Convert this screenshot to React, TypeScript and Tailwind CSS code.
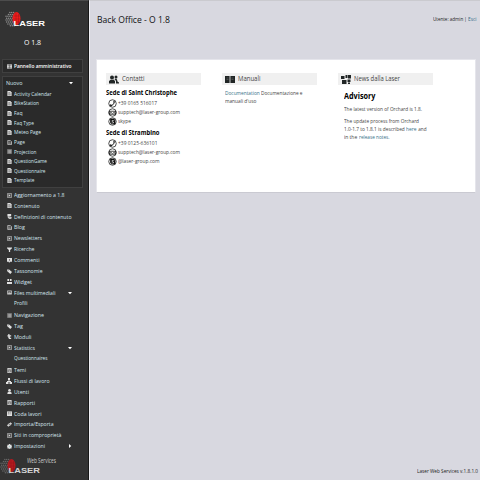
import { useLayoutEffect, useRef } from 'react';

/* Text that is condensed or widened so that it fills a given width. */
function Fit({ w, children, className = '' }: { w: number; children: string; className?: string }) {
  const ref = useRef<HTMLSpanElement>(null);
  useLayoutEffect(() => {
    const el = ref.current;
    if (!el) return;
    el.style.transform = 'none';
    const natural = el.getBoundingClientRect().width;
    el.style.transform = `scaleX(${w / natural})`;
    el.style.marginRight = `${w - natural}px`;
  }, [w, children]);
  return <span ref={ref} className={`inline-block origin-left whitespace-pre ${className}`}>{children}</span>;
}

type Kind = 'doc' | 'page' | 'box' | 'list' | 'filter' | 'comment' | 'tag' | 'widget' | 'image' | 'module' | 'flow' | 'user' | 'queue' | 'swap' | 'gear' | 'defs' | 'grid' | 'report';

function Icon({ k }: { k: Kind }) {
  return (
    <svg viewBox="0 0 12 12" className={k === 'flow' ? '-ml-px block h-[6px] w-[6px] shrink-0' : 'block h-[5px] w-[5px] shrink-0'} fill="#e0e0e0" stroke="none">
      {k === 'doc' && <><path d="M1 0h7l3 3v9H1z" /><path d="M3 4h5M3 7h6M3 9.5h6" stroke="#444" strokeWidth="1.2" /></>}
      {k === 'report' && <><path d="M1 0h10v12H1z" /><path d="M3 3h6M3 5.5h6v4H3z" fill="none" stroke="#333" strokeWidth="1.3" /></>}
      {k === 'page' && <><path d="M1.8 1h6l3 3v7h-9z" fill="none" stroke="#ddd" strokeWidth="1.7" /><path d="M3 5h6M3 8h6" stroke="#ddd" strokeWidth="1.3" /></>}
      {k === 'box' && <><path d="M1 1h10v10H1z" fill="#555" stroke="#bbb" strokeWidth="1.6" /><path d="M4 3l4 3-4 3z" /></>}
      {k === 'list' && <><path d="M1 1h10v10H1z" fill="#777" stroke="#999" /><path d="M3 4h7M3 6.5h7M3 9h7" stroke="#ddd" /></>}
      {k === 'filter' && <path d="M0 1h12v2L7.5 7v5h-3V7L0 3z" />}
      {k === 'comment' && <><path d="M0 0h12v9H7l-2 3-1-3H0z" /><circle cx="6" cy="4.5" r="1.5" fill="#444" /></>}
      {k === 'tag' && <><path d="M0 1h5l7 6-4 5-8-7z" /><circle cx="2.5" cy="3" r="1" fill="#333" /></>}
      {k === 'widget' && <path d="M1 0h4v5H1zM7 0h4v5H7zM0 7h12v5H0z" />}
      {k === 'image' && <><path d="M1 2h10v8H1z" fill="#555" stroke="#ddd" strokeWidth="1.6" /><path d="M2 9l3-4 2 2 1-1 3 3z" /></>}
      {k === 'module' && <path d="M3 0h3v3h4v3H7v3h3v3H5l-2-3V6H1V3h2z" />}
      {k === 'flow' && <path d="M4 0h4v4H7v2h3v2h2v4H7V8H5v4H0V8h2V6h3V4H4z" />}
      {k === 'user' && <><circle cx="6" cy="3" r="3" /><path d="M1 12V9l3-3h4l3 3v3z" /></>}
      {k === 'queue' && <><path d="M0 1h12v11H0z" /><path d="M2 4h4M8 4h2M2 7h4M8 7h2" stroke="#444" strokeWidth="1.3" /></>}
      {k === 'swap' && <path d="M4 3h4V0l4 4-4 4V5H4zM0 8l4-4v2h4v3H4v3z" />}
      {k === 'gear' && <><path d="M5 0h2l1 2 3 0v3l1 1-1 2v3H8l-2 1-2-1H1V8L0 6l1-2V2h3z" /><circle cx="6" cy="6" r="1.5" fill="#9cc" /></>}
      {k === 'defs' && <><path d="M1 0h9v5H1z" /><path d="M1 6l4-1 6 2v4l-4 1-4-2z" /><path d="M4 7h5" stroke="#333" strokeWidth="1.2" /></>}
      {k === 'grid' && <><path d="M0 1h12v10H0z" /><path d="M1 4h10M1 8h10M6 1v10" stroke="#444" strokeWidth="1.2" /></>}
    </svg>
  );
}

const created: [Kind, string, number][] = [
  ['doc', 'Activity Calendar', 37.5], ['doc', 'BikeStation', 25], ['doc', 'Faq', 8.5], ['doc', 'Faq Type', 20],
  ['doc', 'Meteo Page', 27], ['page', 'Page', 11], ['list', 'Projection', 22.5], ['doc', 'QuestionGame', 33],
  ['doc', 'Questionnaire', 31.5], ['doc', 'Template', 20.5],
];

type Item = { k?: Kind; t: string; w: number; caret?: 'down' | 'right' };
const menu: Item[] = [
  { k: 'box', t: 'Aggiornamento a 1.8', w: 50.5 },
  { k: 'doc', t: 'Contenuto', w: 25.5 },
  { k: 'defs', t: 'Definizioni di contenuto', w: 57.5 },
  { k: 'page', t: 'Blog', w: 11 },
  { k: 'box', t: 'Newsletters', w: 28 },
  { k: 'filter', t: 'Ricerche', w: 20.5 },
  { k: 'comment', t: 'Commenti', w: 25.5 },
  { k: 'tag', t: 'Tassonomie', w: 28.5 },
  { k: 'widget', t: 'Widget', w: 18 },
  { k: 'image', t: 'Files multimediali', w: 41.5, caret: 'down' },
  { t: 'Profili', w: 13.5 },
  { k: 'list', t: 'Navigazione', w: 30 },
  { k: 'tag', t: 'Tag', w: 9 },
  { k: 'module', t: 'Moduli', w: 17.5 },
  { k: 'box', t: 'Statistics', w: 21, caret: 'down' },
  { t: 'Questionnaires', w: 33.5 },
  { k: 'report', t: 'Temi', w: 12 },
  { k: 'flow', t: 'Flussi di lavoro', w: 35.5 },
  { k: 'user', t: 'Utenti', w: 15 },
  { k: 'report', t: 'Rapporti', w: 21 },
  { k: 'queue', t: 'Coda lavori', w: 27.5 },
  { k: 'swap', t: 'Importa/Esporta', w: 39.5 },
  { k: 'box', t: 'Siti in comproprietà', w: 47.5 },
  { k: 'gear', t: 'Impostazioni', w: 31, caret: 'right' },
];

function Caret({ dir }: { dir: 'down' | 'right' }) {
  return (
    <svg viewBox="0 0 8 8" className="ml-auto mr-[16px] block h-[4px] w-[4px]" fill="#fff">
      {dir === 'down' ? <path d="M0 2h8L4 6.5z" /> : <path d="M2 0l4.500 4L2 8z" />}
    </svg>
  );
}

function Logo({ dim = false }: { dim?: boolean }) {
  const dots = [];
  for (let y = 0; y < 8; y++) {
    for (let x = 0; x < 7; x++) {
      const dx = x - 3, dy = y - 3.5;
      if (dx * dx / 11 + dy * dy / 15 <= 1.05) dots.push(<circle key={`${x}-${y}`} cx={1 + x * 1.9 + (y % 2) * 0.6} cy={1.5 + y * 1.9} r="0.75" />);
    }
  }
  return (
    <svg viewBox="0 0 42 17" className="block h-[17px] w-[42px]">
      <g fill={dim ? '#666' : '#8b8b8b'}>{dots}</g>
      <ellipse cx="11.500" cy="7.5" rx="4" ry="6.500" fill={dim ? '#b51a20' : '#ee1c1c'} />
      <path d="M9 5h6M8.5 8h7M9 11h6M11 2v11M13.5 3v10" stroke="#8d1515" strokeWidth=".4" />
      <text x="8.5" y="15" textLength="31.5" lengthAdjust="spacingAndGlyphs" fontSize="7.9" fontWeight="700" fontFamily="Liberation Sans, sans-serif" fill={dim ? '#d5d5d5' : '#fff'}>LASER</text>
    </svg>
  );
}

function Sidebar() {
  return (
    <aside className="h-[480px] w-[89px] shrink-0 overflow-hidden border-r border-t border-t-[#4c4c4c] border-r-[#181818] bg-[#333333] text-[5.5px] text-[#d3e5ee]">
      <div className="ml-[5px] mt-[10px]"><Logo /></div>
      <div className="mt-[9px] h-[12px] pl-[23.5px] text-[6.8px] leading-[12px] text-white"><Fit w={17}>O 1.8</Fit></div>
      <div className="ml-[2px] mt-[10px] flex h-[14px] w-[81px] items-center border border-[#404040] bg-[#2a2a2a] pl-[4px] font-semibold text-white">
        <Icon k="grid" /><Fit w={57.5} className="ml-[2px]">Pannello amministrativo</Fit>
      </div>
      <div className="ml-[2px] mt-[3px] h-[112px] w-[81px] border border-[#404040] bg-[#2a2a2a]">
        <div className="flex h-[12px] items-center pl-[3px] text-[5.8px]">
          <Fit w={16.5}>Nuovo</Fit>
          <svg viewBox="0 0 8 8" className="ml-auto mr-[9px] block h-[4px] w-[4px]" fill="#fff"><path d="M0 2h8L4 6.5z" /></svg>
        </div>
        {created.map(([k, t, w]) => (
          <div key={t} className="flex h-[9.65px] items-center pl-[4px]">
            <Icon k={k} /><Fit w={w} className="ml-[2px]">{t}</Fit>
          </div>
        ))}
      </div>
      <nav className="mt-[1.6px]">
        {menu.map(({ k, t, w, caret }) => (
          <div key={t} className={k ? 'flex h-[10.86px] items-center pl-[7px]' : 'flex h-[11.6px] items-center pb-[1px] pl-[14px]'}>
            {k && <span className="w-[7px] shrink-0"><Icon k={k} /></span>}
            <Fit w={w}>{t}</Fit>
            {caret && <Caret dir={caret} />}
          </div>
        ))}
      </nav>
      <div className="mt-[5.4px] pl-[27px] text-[6.3px] leading-[8px] text-[#ccc]"><Fit w={29}>Web Services</Fit></div>
      <div className="-mt-[7.500px]"><Logo dim /></div>
    </aside>
  );
}

type HeadKind = 'people' | 'book' | 'blocks';
function Header({ k, t, w, tight = false }: { k: HeadKind; t: string; w: number; tight?: boolean }) {
  return (
    <div className={`flex h-[12px] w-[95px] items-center bg-[#f0f0f0] pt-px text-[6.7px] text-[#444] ${tight ? '-ml-[6px] pl-[3px]' : 'pl-[3px]'}`}>
      <svg viewBox="0 0 20 18" className={`block h-[9px] w-[10px] ${tight ? 'mr-[2.5px]' : 'mr-[2.5px]'}`} fill="#202525">
        {k === 'people' && <><circle cx="6" cy="5" r="4" /><path d="M0 17v-5l4-3 2 1 3-1 3 3v5z" /><circle cx="14" cy="4" r="3" /><path d="M11 8l3-1 2 2 1 4 3 2v2h-6v-5z" /></>}
        {k === 'book' && <><path d="M0 2h9.2v14H0zM10.8 2H20v14h-9.2z" /><path d="M3 6h4M3 9h4M13 6h4M13 9h4" stroke="#777" /></>}
        {k === 'blocks' && <path d="M0 2h7v6H0zM9 0h4v6H9zM14 0h6v7h-6zM2 10h9v8H2zM13 9h6v5h-6zM14 15h4v3h-4z" />}
      </svg>
      <Fit w={w}>{t}</Fit>
    </div>
  );
}

function Contact({ k, t, w }: { k: 'phone' | 'mail' | 'skype'; t: string; w: number }) {
  return (
    <div className="flex h-[9px] items-center text-[5.4px] text-[#444]">
      <svg viewBox="0 0 18 18" className="ml-[1.5px] mr-[1.500px] block h-[9px] w-[9px]" fill="none" stroke="#111" strokeWidth="1.5">
        <circle cx="9" cy="9" r="7.5" />
        {k === 'phone' && <path d="M5 12.5c5 1 7-3 7.5-7M5 11v2.5h3M10.5 5.5h3" strokeWidth="2" />}
        {k === 'mail' && <><path d="M2.5 6.5h13v6h-13z" /><path d="M2.5 7L9 11l6.500-4M2 12l5-3M16 12l-5-3" strokeWidth="1.1" /></>}
        {k === 'skype' && <><path d="M5 4h7l2 3v7H7l-2-3z" fill="#111" /><path d="M11.500 7H8v2l3 1v2H7" stroke="#fff" strokeWidth="1.2" /></>}
      </svg>
      <Fit w={w}>{t}</Fit>
    </div>
  );
}

export default function App() {
  return (
    <div className="flex h-[480px] w-[480px] overflow-hidden bg-[#d8d8e0] font-['Open_Sans','Noto_Sans',sans-serif]">
      <Sidebar />
      <main className="flex min-w-0 flex-1 flex-col border-l border-t border-l-[#eeeef2] border-t-[#cacacf] pl-[6px] pr-[4px]">
        <header className="flex h-[58px] justify-between pt-[13px]">
          <h1 className="pl-[0.5px] text-[8.5px] leading-[12px] text-[#111]"><Fit w={73}>Back Office - O 1.8</Fit></h1>
          <div className="whitespace-nowrap text-[5.2px] leading-[10px] text-[#222]"><Fit w={35}>Utente: admin | </Fit><Fit w={8.5} className="text-[#357087]">Esci</Fit></div>
        </header>
        <section className="flex h-[134px] shrink-0 border border-[#e5e5eb] border-b-[#cacad2] bg-white pl-[9px] pt-[13px]">
          <div className="w-[116px] shrink-0">
            <Header k="people" t="Contatti" w={22.5} />
            <h2 className="mt-[3px] h-[10px] text-[6.5px] font-bold leading-[10px] text-black"><Fit w={71}>Sede di Saint Christophe</Fit></h2>
            <div className="mt-px">
              <Contact k="phone" t="+39 0165 516017" w={39} />
              <Contact k="mail" t="supptech@laser-group.com" w={62} />
              <Contact k="skype" t="skype" w={13} />
            </div>
            <h2 className="mt-[2px] h-[10px] text-[6.5px] font-bold leading-[10px] text-black"><Fit w={53.5}>Sede di Strambino</Fit></h2>
            <div className="mt-px">
              <Contact k="phone" t="+39 0125-636101" w={39.5} />
              <Contact k="mail" t="supptech@laser-group.com" w={62} />
              <Contact k="skype" t="@laser-group.com" w={41.5} />
            </div>
          </div>
          <div className="w-[122px] shrink-0">
            <Header k="book" t="Manuali" w={22.5} />
            <p className="mt-[4px] whitespace-nowrap pl-[3px] text-[5.2px] leading-[8px] text-[#444]">
              <Fit w={36} className="text-[#357087]">Documentation </Fit><Fit w={41.5}>Documentazione e</Fit><br />
              <Fit w={31.5}>manuali d'uso</Fit>
            </p>
          </div>
          <div>
            <Header k="blocks" t="News dalla Laser" w={46} tight />
            <h2 className="mt-[6px] h-[10px] text-[8px] font-bold leading-[10px] text-black"><Fit w={31.5}>Advisory</Fit></h2>
            <div className="whitespace-nowrap text-[5.2px] leading-[8px] text-[#444]">
              <p className="mt-[4px]"><Fit w={78}>The latest version of Orchard is 1.8.</Fit></p>
              <p className="mt-[4px]">
                <Fit w={75}>The update process from Orchard</Fit><br />
                <Fit w={62}>1.0-1.7 to 1.8.1 is described </Fit><Fit w={10.5} className="text-[#357087]">here</Fit><Fit w={9.5}> and</Fit><br />
                <Fit w={14.5}>in the </Fit><Fit w={30.5} className="text-[#357087]">release notes.</Fit>
              </p>
            </div>
          </div>
        </section>
        <footer className="-mr-[2px] mt-auto pb-[5px] text-right text-[5.5px] leading-[8px] text-[#222]"><Fit w={61}>Laser Web Services v.1.8.1.0</Fit></footer>
      </main>
    </div>
  );
}
